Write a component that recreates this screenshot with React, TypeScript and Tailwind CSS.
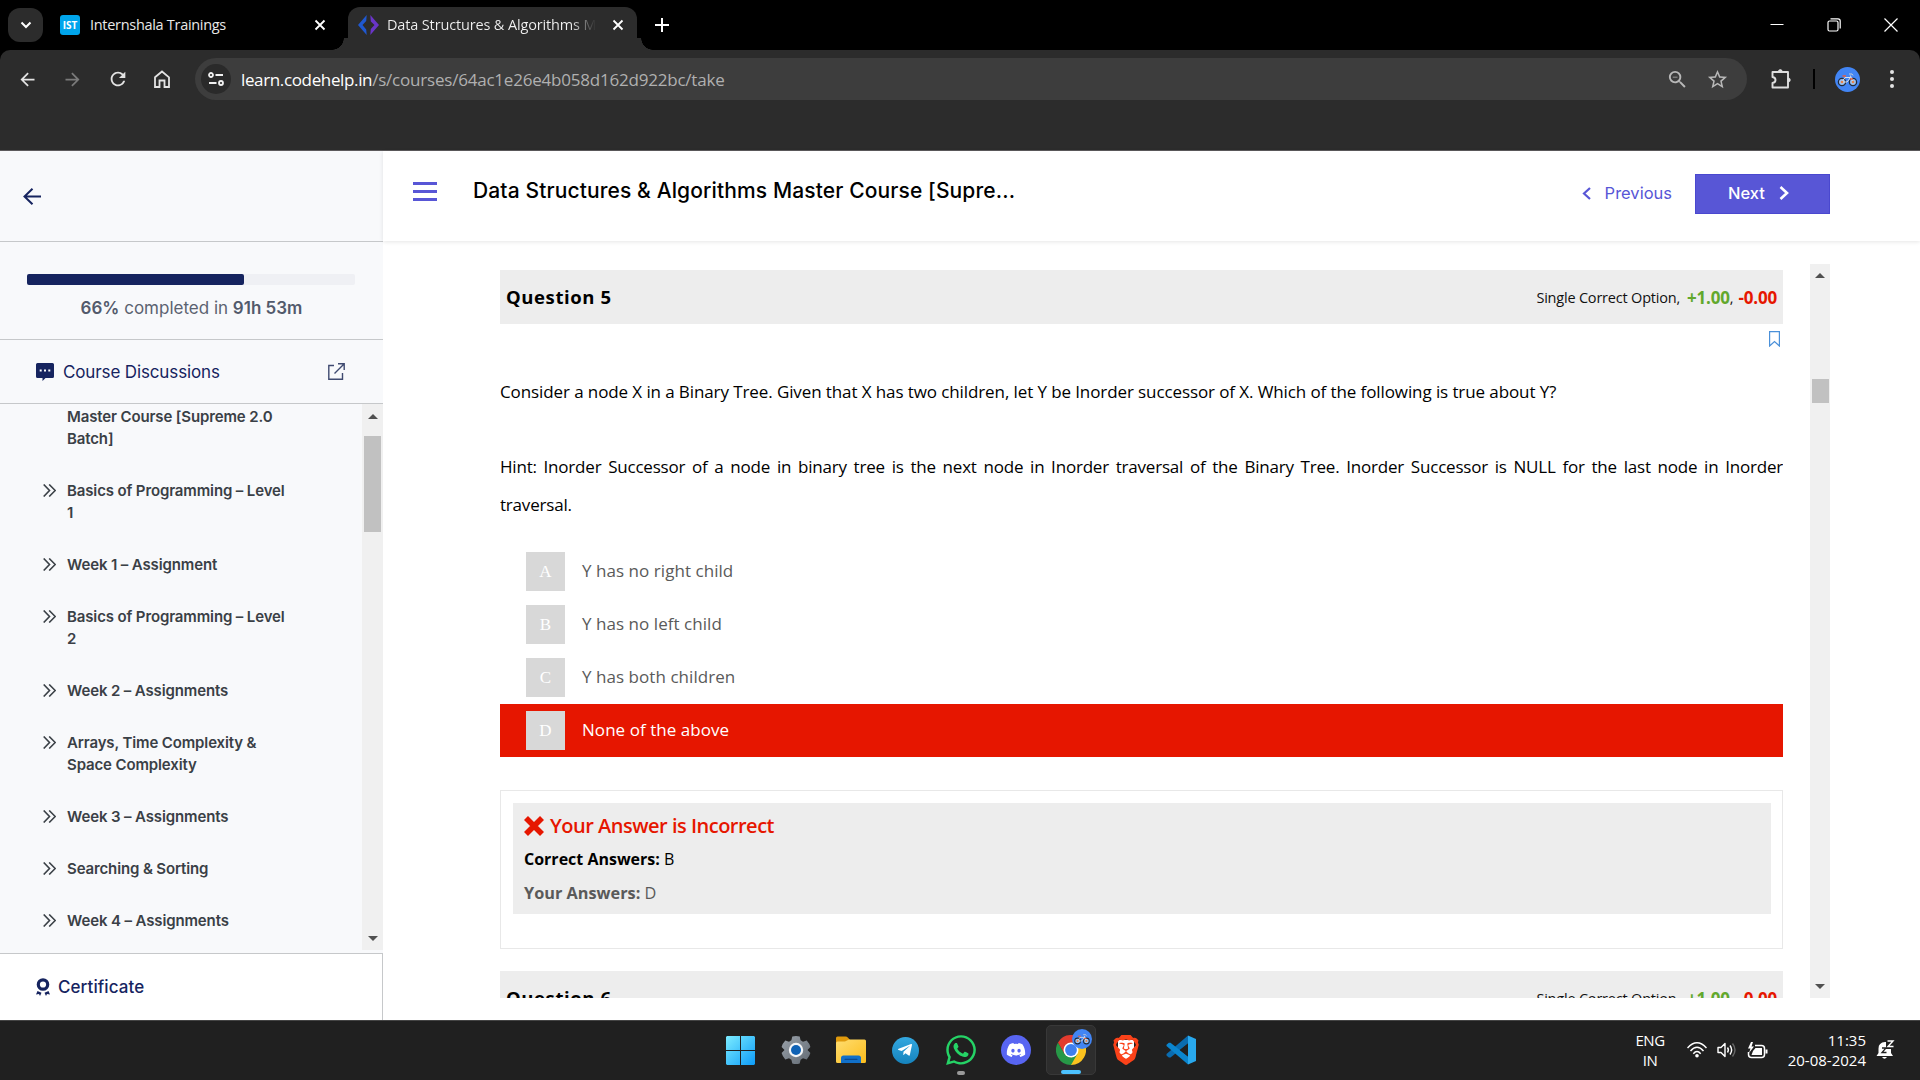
import React from 'react';
import { MdArrowBack, MdArrowForward, MdRefresh, MdZoomOut, MdStarOutline } from 'react-icons/md';
import { FaWhatsapp, FaDiscord, FaTelegramPlane } from 'react-icons/fa';
import { SiBrave } from 'react-icons/si';

const modules = [
  'Basics of Programming – Level 1',
  'Week 1 – Assignment',
  'Basics of Programming – Level 2',
  'Week 2 – Assignments',
  'Arrays, Time Complexity & Space Complexity',
  'Week 3 – Assignments',
  'Searching & Sorting',
  'Week 4 – Assignments',
];

const options = [
  { letter: 'A', text: 'Y has no right child' },
  { letter: 'B', text: 'Y has no left child' },
  { letter: 'C', text: 'Y has both children' },
  { letter: 'D', text: 'None of the above', wrong: true },
];

function Bike({ className }: { className: string }) {
  return (
    <svg viewBox="0 0 25 25" className={className}>
      <circle cx="12.5" cy="12.5" r="12.5" fill="#4285f4" />
      <g fill="none" strokeWidth="1.3">
        <circle cx="7" cy="15" r="3.6" stroke="#202a3c" fill="#9cc4f5" />
        <circle cx="18" cy="15" r="3.6" stroke="#202a3c" fill="#9cc4f5" />
        <path d="M7 15 L10 10.5 H15.6 L12 15 Z M18 15 L15.3 8.5" stroke="#dfe3ea" strokeWidth="1" />
        <path d="M7.5 9 H11 M15 12 H18" stroke="#e8603c" />
        <path d="M14 7 H17 L18 8.5" stroke="#c5ccd6" strokeWidth="1" />
      </g>
      <circle cx="7" cy="15" r="1.3" fill="#e8834a" />
      <circle cx="18" cy="15" r="1.3" fill="#e8834a" />
    </svg>
  );
}

function CloseX({ className }: { className: string }) {
  return (
    <svg viewBox="0 0 12 12" className={className} fill="none" stroke="currentColor" strokeWidth="1.8">
      <path d="M1.5 1.5 L10.5 10.5 M10.5 1.5 L1.5 10.5" />
    </svg>
  );
}

function TabStrip() {
  return (
    <div className="flex h-[50px] bg-black text-[#e8e8e8]">
      <div className="ml-2 mt-2 flex h-[34px] w-[35px] items-center justify-center rounded-[12px] bg-[#2c2c2c]">
        <svg viewBox="0 0 12 8" className="h-2 w-3" fill="none" stroke="#fff" strokeWidth="2">
          <path d="M1.5 1.5 L6 6 L10.500 1.500" />
        </svg>
      </div>
      <div className="ml-[17px] flex h-[50px] w-[272px] items-center">
        <div className="flex size-5 items-center justify-center rounded-[3px] bg-[#00a5ec] text-[10px] font-bold text-white">IST</div>
        <span className="ml-2.5 grow text-[14.5px] tracking-[-0.3px]">Internshala Trainings</span>
        <CloseX className="mr-[6px] size-3 text-white" />
      </div>
      <div className="mt-[7px] flex h-[43px] items-end">
        <div className="h-3 w-4 bg-[radial-gradient(circle_at_0_0,#000_11.5px,#2c2c2c_12px)]" />
        <div className="flex h-[43px] w-[289px] items-center rounded-t-[12px] bg-[#2c2c2c] pb-[7px] pl-2.5 pr-[13px]">
          <svg viewBox="0 0 21 20" className="h-5 w-[21px] shrink-0">
            <path d="M8.700 0 L0 10 L8.700 20 L8.200 14.500 L4.500 10 L8.200 6 Z" fill="#1f58d0" />
            <path d="M12.300 0 L21 10 L12.300 20 L12.800 14 L16.500 10 L12.800 6.500 Z" fill="#6a35c8" />
          </svg>
          <span className="ml-2 w-[209px] overflow-hidden whitespace-nowrap bg-gradient-to-r from-[#f1f1f1] from-[88%] to-[#2c2c2c] bg-clip-text text-[14.5px] tracking-[-0.15px] text-transparent">
            Data Structures &amp; Algorithms M
          </span>
          <CloseX className="ml-auto size-3 shrink-0 text-white" />
        </div>
        <div className="h-3 w-4 bg-[radial-gradient(circle_at_100%_0,#000_11.5px,#2c2c2c_12px)]" />
      </div>
      <svg viewBox="0 0 14 14" className="ml-[2px] mt-[18px] size-3.5" fill="none" stroke="#fff" strokeWidth="2">
        <path d="M7 0 V14 M0 7 H14" />
      </svg>
      <div className="ml-auto mr-[22px] flex items-start gap-[43px] pt-[18px] text-white">
        <svg viewBox="0 0 14 14" className="size-3.5" fill="none" stroke="currentColor" strokeWidth="1">
          <path d="M0.500 6.500 H13.500" />
        </svg>
        <svg viewBox="0 0 14 14" className="size-3.5" fill="none" stroke="currentColor" strokeWidth="1.2">
          <rect x="1" y="3" width="10" height="10" rx="1.500" />
          <path d="M3.500 0.800 H11 Q13.200 0.800 13.200 3 V10.500" />
        </svg>
        <svg viewBox="0 0 14 14" className="size-3.5" fill="none" stroke="currentColor" strokeWidth="1.2">
          <path d="M0.500 0.500 L13.500 13.500 M13.500 0.500 L0.500 13.500" />
        </svg>
      </div>
    </div>
  );
}

function Toolbar() {
  return (
    <div className="bg-black">
      <div className="h-[101px] rounded-t-[10px] border-b border-[#5c5a5c] bg-[#2c2c2c] pt-2">
        <div className="flex h-[42px] items-center">
          <MdArrowBack className="ml-[17px] size-[21px] text-[#e3e3e3]" />
          <MdArrowForward className="ml-6 size-[21px] text-[#7a7a7a]" />
          <MdRefresh className="ml-6 size-[22px] text-[#e3e3e3]" />
          <svg viewBox="0 0 16 18" className="ml-[25px] h-[18px] w-4" fill="none" stroke="#e3e3e3" strokeWidth="1.8">
            <path d="M1 7.300 L8 1.500 L15 7.300 V17 H10.500 V10.500 H5.500 V17 H1 Z" />
          </svg>
          <div className="ml-[25px] flex h-[42px] w-[1552px] items-center rounded-full bg-[#3d3d3d] pl-1.5 pr-[18px]">
            <div className="flex size-[30px] items-center justify-center rounded-full bg-[#2a2a2a]">
              <svg viewBox="0 0 16 14" className="h-3.5 w-4" fill="none" stroke="#f0f0f0" strokeWidth="1.8">
                <circle cx="3" cy="3" r="2" />
                <path d="M7.500 3 H15 M1 11 H8.500" />
                <circle cx="13" cy="11" r="2" />
              </svg>
            </div>
            <div className="ml-2.5 grow pt-px text-[17px] text-[#b0b0b0]">
              <span className="tracking-[-0.36px] text-white">learn.codehelp.in</span>
              <span className="tracking-[-0.21px]">/s/courses/64ac1e26e4b058d162d922bc/take</span>
            </div>
            <MdZoomOut className="size-[23px] text-[#b8b8b8]" />
            <MdStarOutline className="ml-[17px] size-[23px] text-[#b8b8b8]" />
          </div>
          <svg viewBox="0 0 20 20" className="ml-6 size-5" fill="none" stroke="#dedede" strokeWidth="1.9" strokeLinejoin="round">
            <path d="M1.500 3 H17 V18.500 H1.500 V14 Q4.500 13.500 4.500 11 Q4.500 8.500 1.500 8 Z" />
            <path d="M7.300 3 Q7.300 0.600 9.300 0.600 Q11.300 0.600 11.300 3 Z M17 9 Q19.300 9 19.300 11 Q19.300 13 17 13 Z" fill="#dedede" strokeWidth="0.800" />
          </svg>
          <div className="ml-[22px] h-5 w-0.5 bg-black" />
          <Bike className="ml-5 size-[25px]" />
          <svg viewBox="0 0 4 18" className="ml-[30px] h-[18px] w-1" fill="#e3e3e3">
            <circle cx="2" cy="2" r="2" />
            <circle cx="2" cy="9" r="2" />
            <circle cx="2" cy="16" r="2" />
          </svg>
        </div>
      </div>
    </div>
  );
}

function Arrow({ down }: { down?: boolean }) {
  return (
    <svg viewBox="0 0 10 5" className={down ? 'h-[5px] w-2.5 rotate-180' : 'h-[5px] w-2.5'} fill="#505050">
      <path d="M5 0 L10 5 H0 Z" />
    </svg>
  );
}

function ChevronsRight() {
  return (
    <svg viewBox="0 0 13 13" className="mt-1 h-[13px] w-[13px] shrink-0" fill="none" stroke="#3a4046" strokeWidth="1.600">
      <path d="M0.700 0.500 L6.500 6.500 L0.700 12.500 M6.200 0.500 L12.200 6.500 L6.200 12.500" />
    </svg>
  );
}

function Sidebar() {
  return (
    <aside className="flex w-[383px] shrink-0 flex-col bg-[#f8f9fb] font-['Inter',sans-serif]">
      <div className="flex h-[91px] items-center border-b border-[#c6c8ca] pl-[23px]">
        <svg viewBox="0 0 18 17" className="h-[17px] w-[18px]" fill="none" stroke="#16245f" strokeWidth="2">
          <path d="M18 8.500 H1.500 M9.500 0.700 L1.500 8.500 L9.500 16.300" />
        </svg>
      </div>
      <div className="h-[98px] border-b border-[#c6c8ca] pt-8">
        <div className="ml-[27px] h-[11px] w-[328px] rounded-[2px] bg-[#eff0f4]">
          <div className="h-[11px] w-[217px] rounded-[2px] bg-[#16245f]" />
        </div>
        <div className="mt-[11px] text-center text-[17px] leading-6 text-[#5b6270]">
          <span className="font-semibold text-[#525a6b]">66%</span> completed in <span className="font-semibold text-[#525a6b]">91h 53m</span>
        </div>
      </div>
      <div className="flex h-16 items-center border-b border-[#c6c8ca] pl-9 text-[#16245f]">
        <svg viewBox="0 0 18 18" className="h-[18px] w-[18px]">
          <path d="M1.500 0 H16.500 Q18 0 18 1.500 V13.500 Q18 15 16.500 15 H9.500 L6.500 18 V15 H1.500 Q0 15 0 13.500 V1.500 Q0 0 1.500 0" fill="#16245f" />
          <path d="M3.700 6.500 h2 v2 h-2 Z M8 6.500 h2 v2 h-2 Z M12.300 6.500 h2 v2 h-2 Z" fill="#fff" />
        </svg>
        <span className="ml-[9px] pt-0.5 text-[17px] tracking-[-0.13px]">Course Discussions</span>
        <svg viewBox="0 0 17 17" className="ml-auto mr-[38px] size-[17px]" fill="none" stroke="#3f4a70" strokeWidth="1.4">
          <path d="M6 2.500 H0.800 V16.200 H14.500 V10 M10 0.800 H16.200 V7 M16 1 L6.500 10.500" />
        </svg>
      </div>
      <div className="flex h-[546px]">
        <div className="flex w-[362px] flex-col gap-[30px] overflow-hidden pl-[43px] pt-0.5 text-[15px] font-semibold leading-[22px] tracking-[-0.13px] text-[#3a4046]">
          <div className="w-[240px] pl-6">Master Course [Supreme 2.0 Batch]</div>
          {modules.map((m) => (
            <div key={m} className="flex w-[250px]">
              <ChevronsRight />
              <span className="ml-[11px] w-[222px]">{m}</span>
            </div>
          ))}
        </div>
        <div className="flex w-[21px] flex-col items-center bg-[#f0f0f0] pb-[9px] pt-[10px]">
          <Arrow />
          <div className="mt-[17px] h-24 w-[17px] bg-[#c1c1c1]" />
          <div className="grow" />
          <Arrow down />
        </div>
      </div>
      <div className="mt-[3px] flex grow items-center border-r border-t border-[#c6c8ca] bg-white pl-9 text-[17px] font-medium text-[#16245f]">
        <svg viewBox="0 0 14 18" className="h-[18px] w-3.5">
          <circle cx="7" cy="6.500" r="4.700" fill="none" stroke="#16245f" strokeWidth="3.200" />
          <path d="M1.500 13 L5.500 14.800 L4 18 L3 16 L0 16.500 Z M12.500 13 L8.500 14.800 L10 18 L11 16 L14 16.500 Z" fill="#16245f" />
        </svg>
        <span className="ml-2 pt-0.5 tracking-[0.08px]">Certificate</span>
      </div>
    </aside>
  );
}

function QuestionHeader({ n }: { n: number }) {
  return (
    <div className="flex h-[54px] items-center justify-between bg-[#ededed] pl-1.5 pr-[6px]">
      <span className="text-[18.5px] font-bold tracking-[0.6px] text-black">Question {n}</span>
      <div className="flex items-center pt-px text-[14.5px] text-[#111]">
        <span className="tracking-[-0.2px]">Single Correct Option,</span>
        <span className="ml-[7px] text-[17px] font-bold tracking-[-0.2px] text-[#62a82c]">+1.00</span>
        <span>,</span>
        <span className="ml-[5px] text-[17px] font-bold tracking-[-0.2px] text-[#e61600]">-0.00</span>
      </div>
    </div>
  );
}

function CourseMain() {
  return (
    <main className="flex grow flex-col bg-white">
      <header className="flex h-[90px] items-start font-['Inter',sans-serif] shadow-[0_1px_4px_rgba(0,0,0,0.1)]">
        <div className="ml-[30px] mt-[31px] flex w-6 flex-col gap-[5px]">
          <div className="h-[3px] bg-[#5856d6]" />
          <div className="h-[3px] bg-[#5856d6]" />
          <div className="h-[3px] bg-[#5856d6]" />
        </div>
        <h1 className="ml-9 mt-[25px] text-[21px] font-medium leading-[30px] tracking-[0.12px] text-black">
          Data Structures &amp; Algorithms Master Course [Supre...
        </h1>
        <div className="ml-auto mr-[90px] mt-[23px] flex h-10 items-center text-[16.5px] text-[#5856d6]">
          <svg viewBox="0 0 9 13" className="mb-[2px] h-[13px] w-[9px]" fill="none" stroke="currentColor" strokeWidth="2.200">
            <path d="M8 1 L2 6.500 L8 12" />
          </svg>
          <span className="ml-[14px] pb-[2px]">Previous</span>
          <div className="ml-[23px] flex h-10 w-[135px] items-center border border-[#4a48cf] bg-[#5856d6] pb-[2px] pl-8 font-medium text-white">
            Next
            <svg viewBox="0 0 10 14" className="ml-[14px] h-3.5 w-2.5" fill="none" stroke="currentColor" strokeWidth="2.600">
              <path d="M1.500 1 L8 7 L1.500 13" />
            </svg>
          </div>
        </div>
      </header>
      <div className="mt-[23px] flex h-[734px] pl-[117px]">
        <div className="w-[1283px] overflow-hidden pt-1.5">
          <QuestionHeader n={5} />
          <svg viewBox="0 0 11 16" className="ml-auto mr-[3px] mt-[7px] h-4 w-[11px]" fill="none" stroke="#4a90d9" strokeWidth="1.200">
            <path d="M0.600 0.600 H10.400 V15 L5.500 10.500 L0.600 15 Z" />
          </svg>
          <div className="mt-[26px] text-[17px] leading-[37.5px] text-black">
            <p className="whitespace-nowrap tracking-[-0.1px]">
              Consider a node X in a Binary Tree. Given that X has two children, let Y be Inorder successor of X. Which of the following is true about Y?
            </p>
            <p className="mt-[37.5px] text-justify tracking-[-0.2px]">
              Hint: Inorder Successor of a node in binary tree is the next node in Inorder traversal of the Binary Tree. Inorder Successor is NULL for the last node in Inorder traversal.
            </p>
          </div>
          <div className="mt-[22px]">
            {options.map((o) => (
              <div
                key={o.letter}
                className={
                  o.wrong
                    ? 'flex h-[53px] items-center bg-[#e61600] pl-[26px] text-[17px] text-white'
                    : 'flex h-[53px] items-center pl-[26px] text-[17px] text-[#5a5a5a]'
                }
              >
                <div className="flex size-[39px] items-center justify-center bg-[#d8d8d8] font-['Liberation_Serif',serif] text-[17px] text-white">
                  {o.letter}
                </div>
                <span className="ml-[17px] pb-px tracking-[0.05px]">{o.text}</span>
              </div>
            ))}
          </div>
          <div className="mt-[33px] h-[159px] border border-[#e8e8e8] p-3 pr-[11px]">
            <div className="h-[111px] bg-[#ededed] pl-[11px] pt-2">
              <div className="flex h-[30px] items-center text-[20px] font-semibold tracking-[-0.5px] text-[#e61600]">
                <svg viewBox="0 0 20 20" className="mr-1.5 size-5" fill="none" stroke="#e61600" strokeWidth="5.600">
                  <path d="M2 2 L18 18 M18 2 L2 18" />
                </svg>
                Your Answer is Incorrect
              </div>
              <div className="mt-[1px] h-[34px] text-[16px] leading-[34px] text-black">
                <b>Correct Answers:</b> B
              </div>
              <div className="h-[34px] text-[16.3px] leading-[34px] text-[#5a5a5a]">
                <b>Your Answers:</b> D
              </div>
            </div>
          </div>
          <div className="mt-[22px]">
            <QuestionHeader n={6} />
          </div>
        </div>
        <div className="ml-[27px] flex w-5 flex-col items-center bg-[#f0f0f0] pb-[9px] pt-[9px]">
          <Arrow />
          <div className="mt-[101px] h-6 w-[17px] bg-[#c1c1c1]" />
          <div className="grow" />
          <Arrow down />
        </div>
      </div>
    </main>
  );
}

function WindowsLogo() {
  return (
    <svg viewBox="0 0 29 29" className="size-[29px]">
      <defs>
        <linearGradient id="win" x1="0" y1="0" x2="1" y2="1" gradientUnits="objectBoundingBox">
          <stop offset="0" stopColor="#7cecff" />
          <stop offset="1" stopColor="#0d9cf8" />
        </linearGradient>
      </defs>
      <path d="M1 0 H14 V14 H0 V1 Z M15 0 H28 L29 1 V14 H15 Z M0 15 H14 V29 H1 L0 28 Z M15 15 H29 V28 L28 29 H15 Z" fill="url(#win)" />
    </svg>
  );
}

function SettingsGear() {
  return (
    <svg viewBox="0 0 30 30" className="size-[30px]">
      <defs>
        <linearGradient id="gear" x1="0" y1="0" x2="1" y2="1">
          <stop offset="0" stopColor="#9aa2aa" />
          <stop offset="1" stopColor="#626a73" />
        </linearGradient>
      </defs>
      <path
        d="M11.300 1.500 Q15 0.400 18.700 1.500 L19.600 5.300 L22 6.700 L25.700 5.600 Q28.400 8.400 29.400 12 L26.700 14.700 V15.300 L29.400 18 Q28.400 21.600 25.700 24.400 L22 23.300 L19.600 24.700 L18.700 28.500 Q15 29.600 11.300 28.500 L10.400 24.700 L8 23.300 L4.300 24.400 Q1.600 21.600 0.600 18 L3.300 15.300 V14.700 L0.600 12 Q1.600 8.400 4.300 5.600 L8 6.700 L10.400 5.300 Z"
        fill="url(#gear)"
      />
      <circle cx="15" cy="15" r="7.200" fill="#f3f5f7" />
      <circle cx="15" cy="15" r="5" fill="#0f62b5" />
    </svg>
  );
}

function FolderIcon() {
  return (
    <svg viewBox="0 0 30 28" className="h-7 w-[30px]">
      <defs>
        <linearGradient id="fold" x1="0" y1="0" x2="1" y2="1">
          <stop offset="0" stopColor="#ffdd70" />
          <stop offset="1" stopColor="#fbbd1c" />
        </linearGradient>
      </defs>
      <path d="M0 2 Q0 0.500 1.500 0.500 H9.500 Q11 0.500 12 1.700 L14 4 L10 8 H0 Z" fill="#e09a0c" />
      <path d="M0 7 Q0 5.500 1.500 5.500 H9 L13 3.500 H28.500 Q30 3.500 30 5 V25.500 Q30 27 28.500 27 H1.500 Q0 27 0 25.500 Z" fill="url(#fold)" />
      <path d="M5 27 V22 Q5 19.500 7.500 19.500 H22.500 Q25 19.500 25 22 V27 Z" fill="#1170c9" />
      <path d="M9 23.300 H21" stroke="#0b4a91" strokeWidth="1.200" strokeLinecap="round" />
    </svg>
  );
}

function ChromeIcon() {
  return (
    <svg viewBox="0 0 30 30" className="size-[30px]">
      <path d="M15 15 L15 7.500 H28 A15 15 0 0 1 15 30 Z" fill="#fcc31e" />
      <path d="M15 30 A15 15 0 0 1 2 7.500 L8.500 18.700 L15 22.500 L21.500 18.700 Z" fill="#279847" />
      <path d="M2 7.500 L8.500 18.700 L15 15 V7.500 H28 A15 15 0 0 0 2 7.500" fill="#e33b2e" />
      <circle cx="15" cy="15" r="7.500" fill="#fff" />
      <circle cx="15" cy="15" r="5.900" fill="#3f7fee" />
    </svg>
  );
}

function VsCodeIcon() {
  return (
    <svg viewBox="0 0 30 30" className="size-[30px]">
      <path d="M22 0.500 L30 4 V26 L22 29.500 Z" fill="#29a9ee" />
      <path d="M22 0.500 V8.500 L4.500 22.500 L2.800 22.500 L0.500 20.500 V19 Z" fill="#0a6cb0" />
      <path d="M22 29.500 V21.500 L4.500 7.700 L2.800 7.700 L0.500 9.700 V11 Z" fill="#0b85ce" />
      <path d="M22 8.500 V21.500 L13.800 15 Z" fill="#202020" />
    </svg>
  );
}

function Cell({ children }: { children: React.ReactNode }) {
  return <div className="flex h-[50px] w-[55.1px] shrink-0 items-center justify-center">{children}</div>;
}

function Taskbar() {
  return (
    <footer className="grid h-[60px] grid-cols-[1fr_497px_1fr] border-t border-[#444] bg-[#202020] text-white">
      <div />
      <div className="flex pl-[1.5px] pt-1">
        <Cell><WindowsLogo /></Cell>
        <Cell><SettingsGear /></Cell>
        <Cell><FolderIcon /></Cell>
        <Cell>
          <div className="flex size-[27px] items-center justify-center rounded-full bg-gradient-to-b from-[#33a8e0] to-[#1583bd]">
            <FaTelegramPlane className="mr-0.5 size-4" />
          </div>
        </Cell>
        <Cell>
          <div className="relative">
            <FaWhatsapp className="size-[34px] text-[#25d366]" />
            <div className="absolute -bottom-[8px] left-[13px] h-1 w-2 rounded-full bg-[#9a9a9a]" />
          </div>
        </Cell>
        <Cell>
          <div className="flex size-[30px] items-center justify-center rounded-full bg-[#5865f2]">
            <FaDiscord className="size-5" />
          </div>
        </Cell>
        <Cell>
          <div className="relative flex size-[50px] items-center justify-center rounded-[5px] border border-[#383838] bg-[#2d2d2d]">
            <ChromeIcon />
            <Bike className="absolute right-[3px] top-[3px] size-5" />
            <div className="absolute bottom-0 left-[14px] h-1 w-5 rounded-full bg-[#4cc2ff]" />
          </div>
        </Cell>
        <Cell>
          <div className="relative flex items-center justify-center">
            <div className="absolute h-5 w-4 bg-white" />
            <SiBrave className="relative size-[30px] text-[#fb4219]" />
          </div>
        </Cell>
        <Cell><VsCodeIcon /></Cell>
      </div>
      <div className="flex items-center justify-end pb-px pr-[25px] text-[15px] leading-5">
        <div className="mr-[22px] text-center tracking-[-0.4px]">
          ENG
          <br />
          IN
        </div>
        <svg viewBox="0 0 20 16" className="h-4 w-5" fill="none" stroke="#fff" strokeWidth="1.500">
          <path d="M0.500 6 Q10 -4.500 19.500 6 M3.500 9 Q10 1.500 16.500 9 M6.300 11.700 Q10 7.500 13.700 11.700" />
          <circle cx="10" cy="13.700" r="1.800" fill="#fff" stroke="none" />
        </svg>
        <svg viewBox="0 0 20 18" className="ml-2.5 h-[18px] w-5" fill="none" stroke="#fff" strokeWidth="1.400">
          <path d="M1 6.500 H4 L8 2.500 V15.500 L4 11.500 H1 Z" strokeLinejoin="round" />
          <path d="M10.500 6.500 Q12.300 9 10.500 11.500 M13 4.500 Q16.300 9 13 13.500" />
          <path d="M15.500 2.500 Q20.500 9 15.500 15.500" stroke="#666" />
        </svg>
        <svg viewBox="0 0 21 17" className="ml-2.5 h-[17px] w-[21px]" fill="none" stroke="#fff" strokeWidth="1.500">
          <path d="M8 3.500 H14.500 Q17.500 3.500 17.500 6.500 V12.500 Q17.500 15.500 14.500 15.500 H4.500 Q1.500 15.500 1.500 12.500 V10" />
          <path d="M8.500 6 H15 V13 H4.500 L6 9 Z M18.500 7.500 H20.500 V11.500 H18.500 Z M4 0 L1 6.500 H3.500 L2 11 L7 4.500 H4.500 L6 0 Z" fill="#fff" stroke="none" />
        </svg>
        <div className="ml-[20px] pb-px text-right">
          11:35
          <br />
          20-08-2024
        </div>
        <svg viewBox="0 0 19 20" className="ml-2.5 h-5 w-[19px]">
          <path d="M9 2 Q2.500 2.500 2.500 8.500 V13 L0.500 16 H17 L15 13 V9 H10 V2 Z M6 17 Q8.500 20.500 11 17 Z" fill="#fff" />
          <path d="M6 8 H10 L6 12.500 H10.500" stroke="#202020" strokeWidth="1.300" fill="none" />
          <path d="M11.500 1 H17 L12 6.500 H17.500" stroke="#fff" strokeWidth="1.400" fill="none" />
        </svg>
      </div>
    </footer>
  );
}

export default function App() {
  return (
    <div className="flex h-[1080px] w-[1920px] flex-col overflow-hidden font-['Open_Sans','Noto_Sans',sans-serif]">
      <TabStrip />
      <Toolbar />
      <div className="flex h-[869px]">
        <Sidebar />
        <CourseMain />
      </div>
      <Taskbar />
    </div>
  );
}
